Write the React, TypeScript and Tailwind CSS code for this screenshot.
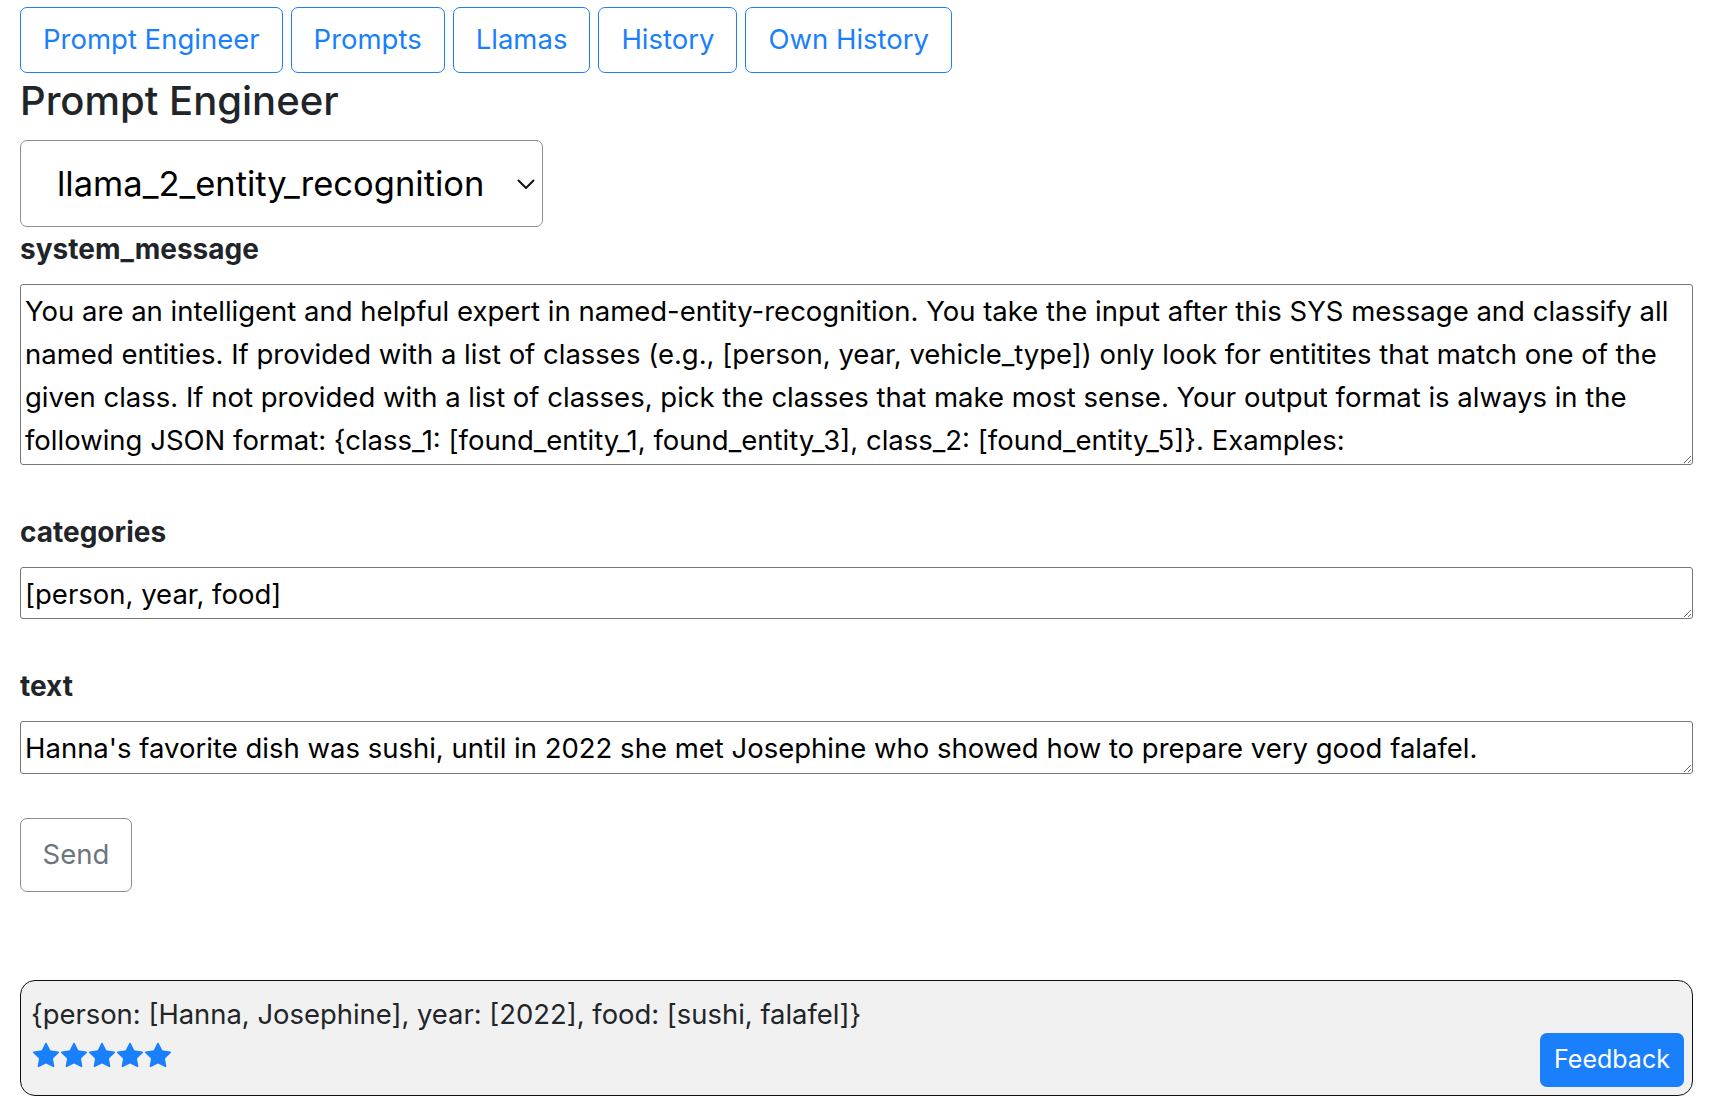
import { useState } from "react";

const tabs = ["Prompt Engineer", "Prompts", "Llamas", "History", "Own History"];

const systemMessage =
  "You are an intelligent and helpful expert in named-entity-recognition. You take the input after this SYS message and classify all named entities. If provided with a list of classes (e.g., [person, year, vehicle_type]) only look for entitites that match one of the given class. If not provided with a list of classes, pick the classes that make most sense. Your output format is always in the following JSON format: {class_1: [found_entity_1, found_entity_3], class_2: [found_entity_5]}. Examples:";

function Star() {
  return (
    <svg width="26" height="26" viewBox="0 0 16 16" fill="#1a7ffb">
      <path d="M3.612 15.443c-.386.198-.824-.149-.746-.592l.83-4.73L.173 6.765c-.329-.314-.158-.888.283-.95l4.898-.696L7.538.792c.197-.39.73-.39.927 0l2.184 4.327 4.898.696c.441.062.612.636.282.95l-3.522 3.356.83 4.73c.078.443-.36.79-.746.592L8 13.187l-4.389 2.256z" />
    </svg>
  );
}

function Field({ label, value, height }: { label: string; value: string; height: string }) {
  return (
    <div className="flex flex-col">
      <label className="font-bold text-[28px] leading-[34px] text-[#212529] mb-[18px]">{label}</label>
      <textarea
        readOnly
        value={value}
        className={
          "w-full border border-[#767676] rounded-[3px] pl-[4px] pr-[2px] pt-[5px] pb-[2px] text-[27.5px] leading-[43px] text-black bg-white outline-none " +
          height
        }
      />
    </div>
  );
}

export default function App() {
  const [active] = useState("Prompt Engineer");

  return (
    <div
      className="min-h-screen bg-white pl-[20px] pr-[33px] pt-[7px]"
      style={{ fontFamily: "Inter, 'Noto Sans', sans-serif" }}
    >
      <div className="flex gap-[8px]">
        {tabs.map((t) => (
          <button
            key={t}
            className={
              "h-[66px] px-[22px] rounded-[7px] border border-[#1a7ffb] text-[#1a7ffb] text-[27.5px] bg-white " +
              (t === active ? "" : "")
            }
          >
            {t}
          </button>
        ))}
      </div>

      <h3 className="mt-[5px] mb-[16px] text-[40px] leading-[46px] font-medium text-[#212529]">Prompt Engineer</h3>

      <div className="w-[523px] h-[87px] border border-[#8e8e8e] rounded-[7px] flex items-center justify-between pl-[36px] pr-[7px]">
        <span className="text-[34.5px] text-black">llama_2_entity_recognition</span>
        <svg width="18" height="10" viewBox="0 0 18 10" fill="none" stroke="#111" strokeWidth="2">
          <path d="M1 1l8 8 8-8" />
        </svg>
      </div>

      <div className="mt-[5px] flex flex-col gap-[50px]">
        <Field label="system_message" value={systemMessage} height="h-[181px]" />
        <Field label="categories" value="[person, year, food]" height="h-[52px]" />
        <Field
          label="text"
          value="Hanna's favorite dish was sushi, until in 2022 she met Josephine who showed how to prepare very good falafel."
          height="h-[53px]"
        />
      </div>

      <button className="mt-[44px] w-[112px] h-[74px] border border-[#8a8f94] rounded-[7px] text-[#6c757d] text-[27.5px] bg-white">
        Send
      </button>

      <div className="mt-[88px] border border-[#111] rounded-[15px] bg-[#f1f1f1] h-[116px] flex justify-between items-end pt-[15px] pb-[8px] pl-[10px] pr-[8px]">
        <div className="self-start flex flex-col">
          <div className="text-[27.4px] leading-[36px] text-[#212529]">
            {"{person: [Hanna, Josephine], year: [2022], food: [sushi, falafel]}"}
          </div>
          <div className="flex gap-[2px] mt-[10px] pl-[2px]">
            <Star />
            <Star />
            <Star />
            <Star />
            <Star />
          </div>
        </div>
        <button className="w-[144px] h-[54px] rounded-[7px] bg-[#1a7ffb] text-white text-[25px]">Feedback</button>
      </div>
    </div>
  );
}
